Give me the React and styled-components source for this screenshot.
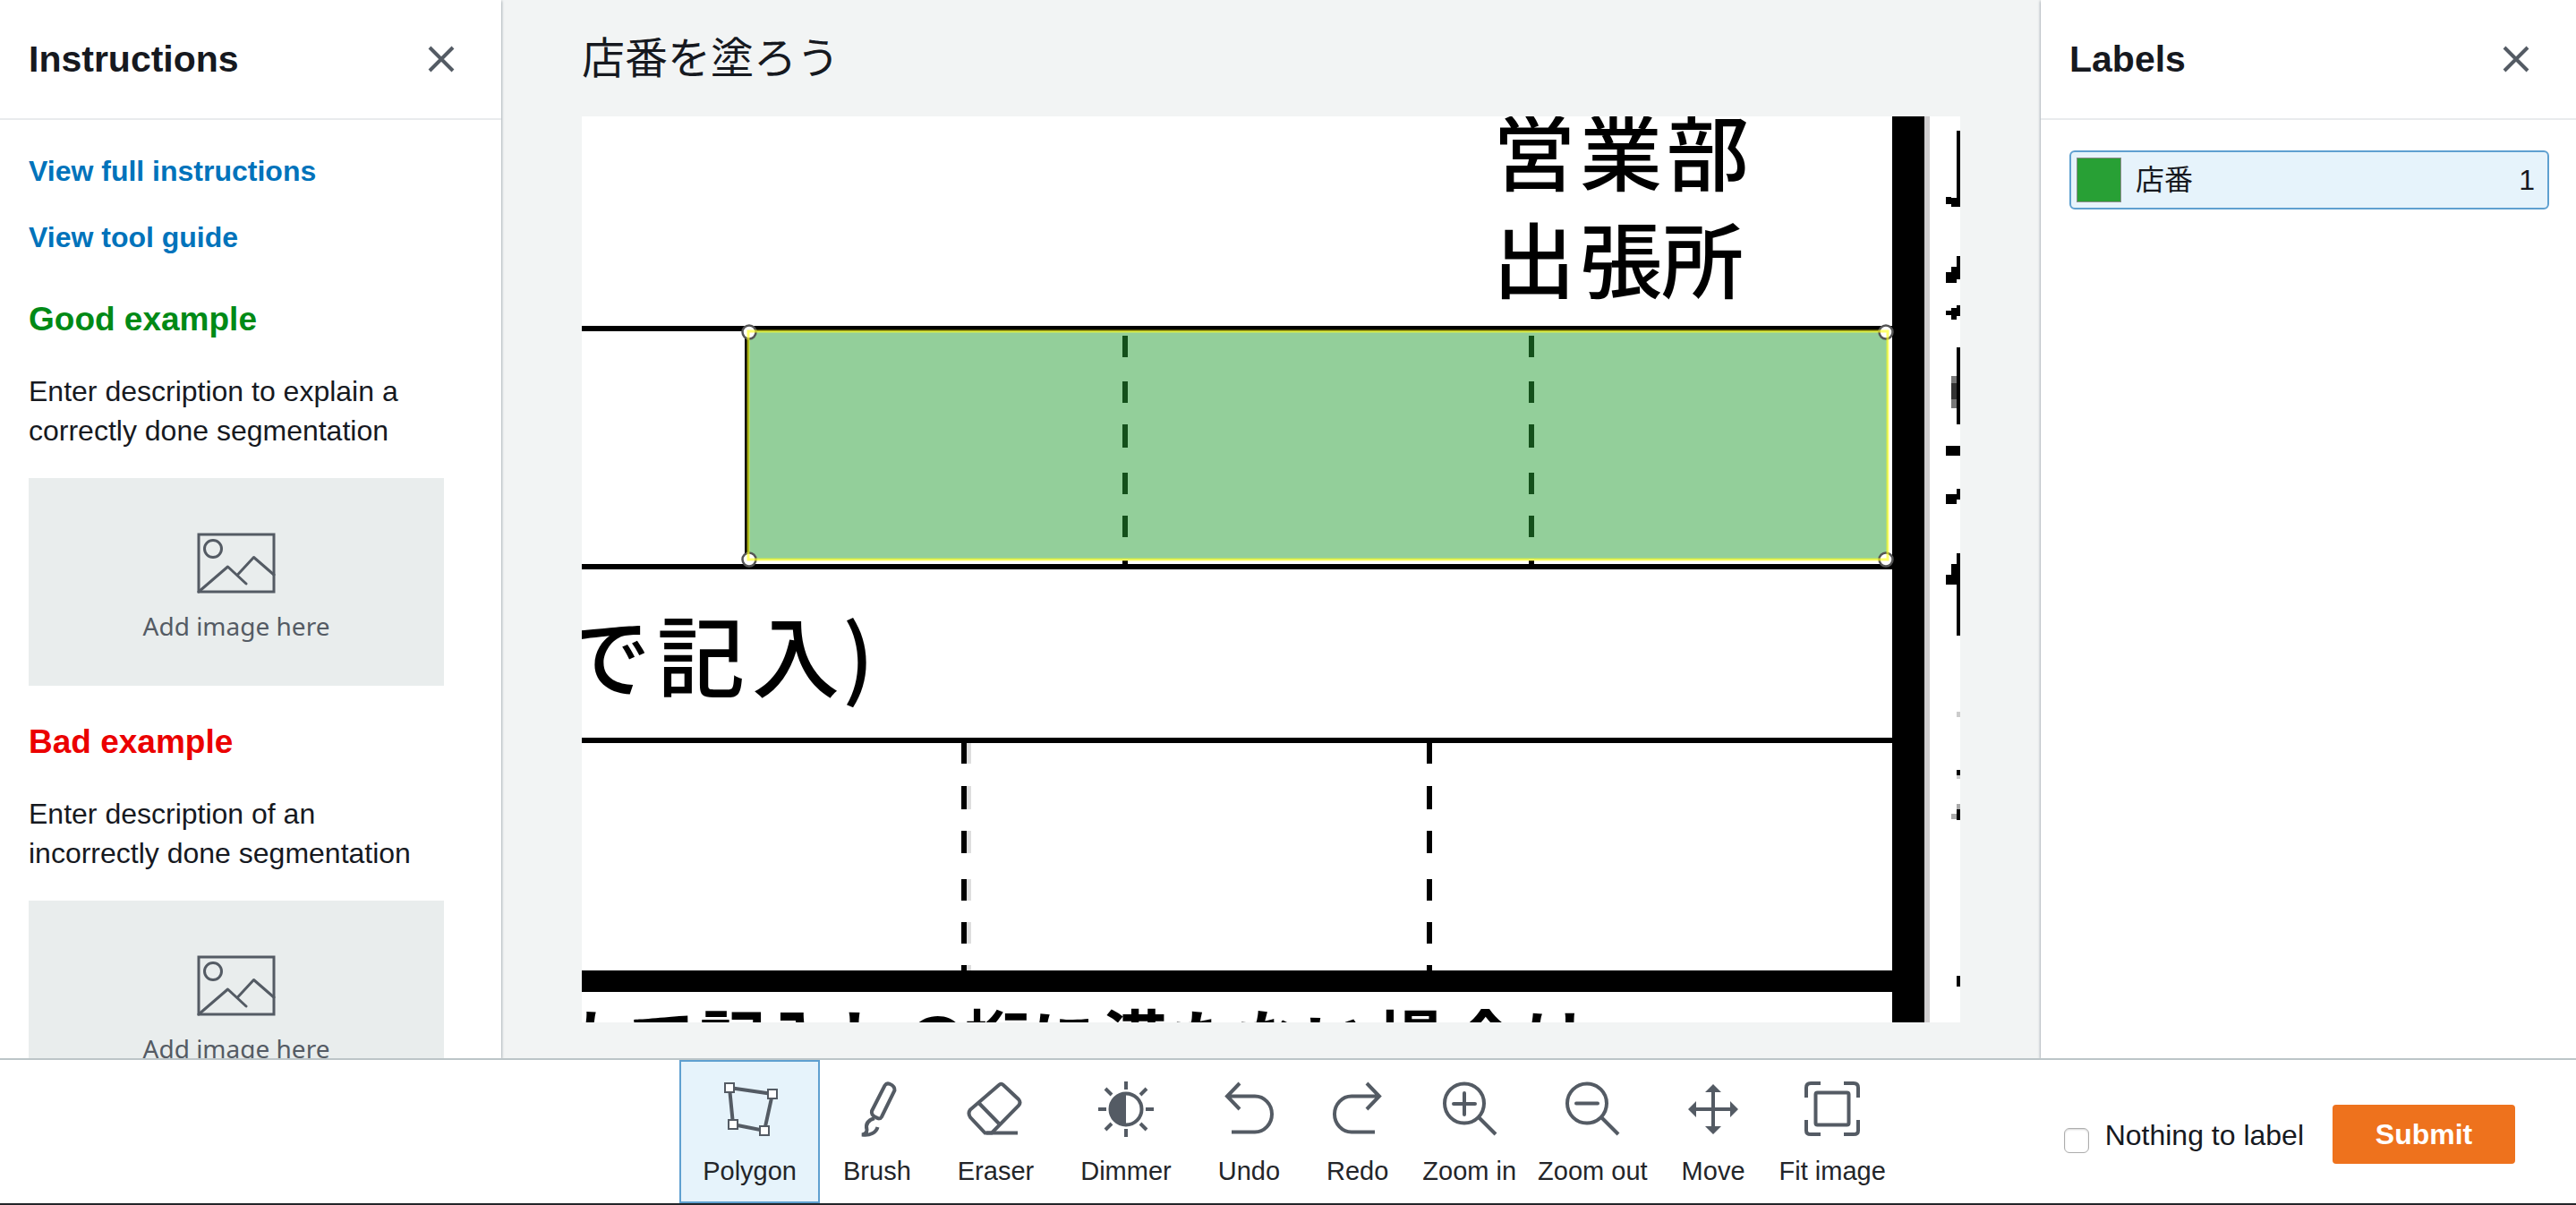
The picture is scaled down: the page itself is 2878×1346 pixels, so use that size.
import React, { useState } from "react";
import styled, { createGlobalStyle } from "styled-components";

const GlobalStyle = createGlobalStyle`
  *, *::before, *::after { box-sizing: border-box; }
  body {
    margin: 0;
    color: #16191f;
    background: #fff;
    font-family: "Liberation Sans", "Noto Sans CJK JP", sans-serif;
    font-size: 32px;
    line-height: 44px;
  }
`;

const Page = styled.div`
  display: flex;
  flex-direction: column;
  height: 100vh;
  border-bottom: 2px solid #232529;
`;

const Workspace = styled.div`
  flex: 1;
  min-height: 0;
  display: flex;
  overflow: hidden;
`;

const Panel = styled.aside`
  flex: none;
  width: ${(p) => p.$width}px;
  background: #fff;
  overflow: hidden;
  position: relative;
  z-index: 1;
  box-shadow: 0 1px 3px #6f7c86;
`;

const PanelHeader = styled.header`
  display: flex;
  align-items: center;
  justify-content: space-between;
  height: 134px;
  padding: 0 51px 0 32px;
  border-bottom: 2px solid #e9ebed;
`;

const PanelTitle = styled.h2`
  margin: 0;
  font-size: 41px;
  line-height: 48px;
`;

const IconButton = styled.button`
  display: flex;
  padding: 0;
  border: 0;
  background: none;
  color: #545b64;
  cursor: pointer;
`;

const Guide = styled.div`
  padding: 35px 64px 0 32px;
`;

const GuideLinks = styled.nav`
  display: flex;
  flex-direction: column;
  gap: 30px;
  margin-bottom: 48px;
`;

const GuideLink = styled.a`
  color: #0073bb;
  font-weight: 700;
  text-decoration: none;
`;

const ExampleTitle = styled.h3`
  margin: 0 0 36px;
  color: ${(p) => p.$color};
  font-size: 37px;
  line-height: 44px;
`;

const ExampleText = styled.p`
  margin: 0 0 31px;
`;

const Placeholder = styled.div`
  display: flex;
  flex-direction: column;
  align-items: center;
  gap: 16px;
  height: 232px;
  margin-bottom: 41px;
  padding-top: 61px;
  background: #e9eded;
  color: #545b64;
  font-family: "Noto Sans", sans-serif;
  font-size: 28px;
  line-height: 40px;
`;

const Main = styled.main`
  flex: 1;
  min-width: 0;
  display: flex;
  flex-direction: column;
  padding: 0 90px 40px;
  background: #f2f4f4;
`;

const TaskTitle = styled.h1`
  margin: 0;
  padding: 36px 0 34px;
  font-size: 48px;
  line-height: 60px;
  font-weight: 400;
`;

const Canvas = styled.div`
  flex: 1;
  min-height: 0;
  background: #fff;
  svg { display: block; width: 100%; height: 100%; }
`;

const LabelList = styled.div`
  padding: 34px 30px 0 32px;
`;

const LabelButton = styled.button`
  display: flex;
  align-items: center;
  gap: 16px;
  width: 100%;
  height: 66px;
  padding: 0 14px 0 6px;
  border: 2px solid #5fa0d0;
  border-radius: 6px;
  background: #e6f3fb;
  color: inherit;
  font: inherit;
  text-align: left;
  cursor: pointer;
`;

const Swatch = styled.span`
  width: 50px;
  height: 50px;
  border: 1px solid #8a8a8a;
  background: #28a035;
`;

const LabelName = styled.span`
  flex: 1;
`;

const Footer = styled.footer`
  display: grid;
  grid-template-columns: 1fr auto 1fr;
  height: 162px;
  border-top: 2px solid #bcc5c8;
`;

const Toolbar = styled.div`
  grid-column: 2;
  display: flex;
`;

const ToolButton = styled.button`
  display: flex;
  flex-direction: column;
  align-items: center;
  gap: 19px;
  padding: 21px ${(p) => (p.$narrow ? 10 : 24)}px 0;
  border: 2px solid ${(p) => (p.$active ? "#5fa0d0" : "transparent")};
  background: ${(p) => (p.$active ? "#e6f3fb" : "none")};
  color: #545b64;
  font: inherit;
  font-size: 29px;
  line-height: 36px;
  white-space: nowrap;
  cursor: pointer;
`;

const ToolLabel = styled.span`
  color: #232529;
`;

const Actions = styled.div`
  display: flex;
  align-items: flex-start;
  justify-content: flex-end;
  gap: 32px;
  padding: 50px 68px 0 0;
`;

const NothingLabel = styled.label`
  display: flex;
  align-items: flex-end;
  gap: 18px;
  padding-top: 14px;
  line-height: 40px;
`;

const Checkbox = styled.input`
  appearance: none;
  width: 28px;
  height: 28px;
  margin: 0;
  border: 1px solid #adadad;
  border-radius: 6px;
  background: #fff;
  box-shadow: inset 0 1px 2px #d4d4d4;
  &:checked { background: #0073bb; }
`;

const SubmitButton = styled.button`
  width: 204px;
  height: 66px;
  padding: 0;
  border: 0;
  border-radius: 4px;
  background: #ee721d;
  color: #fff;
  font: inherit;
  font-weight: 700;
  cursor: pointer;
`;

const CloseIcon = () => (
  <svg width="32" height="32" viewBox="0 0 32 32" stroke="currentColor" strokeWidth="4" aria-hidden="true">
    <path d="M3 3 29 29M29 3 3 29" />
  </svg>
);

const PictureIcon = () => (
  <svg width="88" height="68" viewBox="0 0 88 68" fill="none" stroke="currentColor" strokeWidth="3" aria-hidden="true">
    <rect x="2" y="2" width="84" height="64" />
    <circle cx="18" cy="18" r="9.5" />
    <path d="M2 66 34.5 38 55 57M45 47.500 63.500 27.500 86 47" strokeLinejoin="round" strokeLinecap="round" />
  </svg>
);

const undoShape = <path d="M22 3 8 17.500 22 32M8 17.500H39A19 20 0 0 1 39 57.500H13" />;
const lens = (
  <>
    <circle cx="26" cy="25.500" r="22" />
    <path d="M42 41 61 60" />
  </>
);

const toolShapes = {
  Polygon: (
    <>
      <path d="M9 8 57 15 48 56 13 49Z" />
      <g fill="#fff" strokeWidth="2">
        <rect x="4" y="3" width="10" height="10" />
        <rect x="52" y="10" width="10" height="10" />
        <rect x="43" y="51" width="10" height="10" />
        <rect x="8" y="44" width="10" height="10" />
      </g>
    </>
  ),
  Brush: (
    <>
      <path d="M26 34 40.500 5.500Q42.500 2.500 46 3.800 52 6.500 51.500 11L37 40.500Q35 44 30.500 41 25 38.500 26 34Z" />
      <path d="M29 42C20 45 19 50 20.500 55 20.500 58 18 60 15 60.500 24 62 31 58 32.500 52 33 46 29 42Z" />
    </>
  ),
  Eraser: (
    <>
      <path d="M36 5Q38.500 2.500 41 5L58 21Q61 24.500 58 28L28 58.500H20.500L4 41Q1 36.500 4 32.500Z" />
      <path d="M14 25.500 36 48M22 58.500H57" />
    </>
  ),
  Dimmer: (
    <>
      <circle cx="32" cy="32" r="17.500" />
      <path d="M32 14.500A17.500 17.500 0 0 0 32 49.500Z" fill="currentColor" stroke="none" />
      <path d="M32 1V10M32 54V63M1 32H10M54 32H63M9 9 16 16M48 48 55 55M55 9 48 16M16 48 9 55" />
    </>
  ),
  Undo: undoShape,
  Redo: <g transform="matrix(-1 0 0 1 64 0)">{undoShape}</g>,
  "Zoom in": (
    <>
      {lens}
      <path d="M26 14V38M14 26H38" strokeLinecap="round" />
    </>
  ),
  "Zoom out": (
    <>
      {lens}
      <path d="M14 25.500H38" strokeLinecap="round" />
    </>
  ),
  Move: (
    <>
      <path d="M32 10V54M10 32H54" />
      <path
        d="M32 4 41 13H23ZM32 60 41 51H23ZM4 32 13 23V41ZM60 32 51 23V41Z"
        fill="currentColor"
        stroke="none"
      />
    </>
  ),
  "Fit image": (
    <>
      <path d="M19 3H8Q3 3 3 8V19M45 3H56Q61 3 61 8V19M3 44V56Q3 60 8 60H19M61 44V56Q61 60 56 60H45" />
      <rect x="13.500" y="13.500" width="37" height="36" rx="2" />
    </>
  ),
};

const ToolIcon = ({ name }) => (
  <svg width="64" height="64" viewBox="0 0 64 64" fill="none" stroke="currentColor" strokeWidth="4" aria-hidden="true">
    {toolShapes[name]}
  </svg>
);

const upperDashes = [[245, 24], [296, 24], [344, 26], [398, 24], [446, 24], [496, 4]];
const lowerDashes = [[700, 23], [748, 26], [798, 25], [852, 24], [900, 24], [948, 6]];

// Slivers of the next column, cut off by the right edge: x, y, height, shade.
const edgeMarks = [
  [1536, 16, 85, "#000"], [1524, 90, 8, "#000"], [1530, 91, 10, "#000"],
  [1536, 156, 26, "#000"], [1530, 168, 18, "#000"], [1524, 174, 12, "#000"],
  [1536, 211, 12, "#000"], [1530, 214, 13, "#000"], [1524, 217, 5, "#000"],
  [1536, 258, 86, "#000"], [1530, 290, 36, "#777"], [1530, 298, 18, "#333"],
  [1536, 368, 11, "#000"], [1530, 368, 11, "#000"], [1524, 368, 11, "#000"],
  [1536, 416, 12, "#000"], [1530, 422, 11, "#000"], [1524, 422, 11, "#000"],
  [1536, 488, 92, "#000"], [1530, 500, 23, "#000"], [1524, 512, 11, "#000"],
  [1536, 665, 6, "#ccc"], [1536, 730, 6, "#000"], [1536, 736, 4, "#ccc"],
  [1536, 768, 6, "#aaa"], [1536, 774, 12, "#000"], [1530, 779, 6, "#aaa"],
  [1536, 960, 12, "#000"],
];

const corners = [[187, 241], [1457, 241], [187, 495], [1457, 495]];

const FormScan = () => (
  <svg viewBox="0 0 1540 1012" preserveAspectRatio="xMidYMid slice" role="img" aria-label="店番">
    <g fontFamily='"Noto Sans CJK JP", sans-serif' fontWeight="500" textAnchor="middle">
      <text x="1064 1161 1258" y="76" fontSize="92">営業部</text>
      <text x="1064 1161 1252" y="196" fontSize="92">出張所</text>
      <text x="28 133 239 309" y="641" fontSize="98">で記入)</text>
      <text x="18 90 169 242 320 396 464 538 618 695 768 843 925 1010 1089" y="1060" fontSize="74" fontWeight="700">
        もで記入しの桁に満たない場合は
      </text>
    </g>
    <rect y="234" width="1466" height="6" />
    <rect y="500" width="1466" height="6" />
    <rect y="694" width="1466" height="6" />
    <rect y="954" width="1466" height="24" />
    <rect x="182" y="236" width="5" height="266" />
    <rect x="1464" width="36" height="1012" />
    <rect x="1500" width="6" height="1012" fill="#cfcdce" />
    {upperDashes.map(([y, h]) => (
      <g key={y}>
        <rect x="604" y={y} width="6" height={h} />
        <rect x="1058" y={y} width="6" height={h} />
      </g>
    ))}
    {lowerDashes.map(([y, h]) => (
      <g key={y}>
        <rect x="430" y={y} width="5" height={h} fill="#dedede" />
        <rect x="424" y={y} width="6" height={h} />
        <rect x="944" y={y} width="6" height={h} />
      </g>
    ))}
    {edgeMarks.map(([x, y, h, fill]) => (
      <rect key={`${x}-${y}`} x={x} y={y} width="6" height={h} fill={fill} />
    ))}
    <rect x="186" y="240" width="1273" height="255" fill="#28a035" fillOpacity="0.5" />
    {corners.map(([x, y]) => (
      <circle key={`${x}-${y}`} cx={x} cy={y} r="7.500" fill="#fff" stroke="#555" strokeWidth="2.5" />
    ))}
    <rect x="186" y="240" width="1273" height="255" fill="none" stroke="#ffff1e" strokeOpacity="0.65" strokeWidth="3" />
  </svg>
);

const Example = ({ color, title, children }) => (
  <section>
    <ExampleTitle $color={color}>{title}</ExampleTitle>
    <ExampleText>{children}</ExampleText>
    <Placeholder>
      <PictureIcon />
      Add image here
    </Placeholder>
  </section>
);

export default function App() {
  const [tool, setTool] = useState("Polygon");

  return (
    <Page>
      <GlobalStyle />
      <Workspace>
        <Panel $width={560}>
          <PanelHeader>
            <PanelTitle>Instructions</PanelTitle>
            <IconButton aria-label="Close instructions"><CloseIcon /></IconButton>
          </PanelHeader>
          <Guide>
            <GuideLinks>
              <GuideLink href="#instructions">View full instructions</GuideLink>
              <GuideLink href="#tools">View tool guide</GuideLink>
            </GuideLinks>
            <Example color="#008a16" title="Good example">
              Enter description to explain a correctly done segmentation
            </Example>
            <Example color="#eb0000" title="Bad example">
              Enter description of an incorrectly done segmentation
            </Example>
          </Guide>
        </Panel>
        <Main>
          <TaskTitle>店番を塗ろう</TaskTitle>
          <Canvas><FormScan /></Canvas>
        </Main>
        <Panel $width={598}>
          <PanelHeader>
            <PanelTitle>Labels</PanelTitle>
            <IconButton aria-label="Close labels"><CloseIcon /></IconButton>
          </PanelHeader>
          <LabelList>
            <LabelButton>
              <Swatch />
              <LabelName>店番</LabelName>
              <span>1</span>
            </LabelButton>
          </LabelList>
        </Panel>
      </Workspace>
      <Footer>
        <Toolbar role="toolbar">
          {Object.keys(toolShapes).map((name) => (
            <ToolButton
              key={name}
              $active={name === tool}
              $narrow={name.includes(" ")}
              onClick={() => setTool(name)}
            >
              <ToolIcon name={name} />
              <ToolLabel>{name}</ToolLabel>
            </ToolButton>
          ))}
        </Toolbar>
        <Actions>
          <NothingLabel>
            <Checkbox type="checkbox" />
            Nothing to label
          </NothingLabel>
          <SubmitButton>Submit</SubmitButton>
        </Actions>
      </Footer>
    </Page>
  );
}
